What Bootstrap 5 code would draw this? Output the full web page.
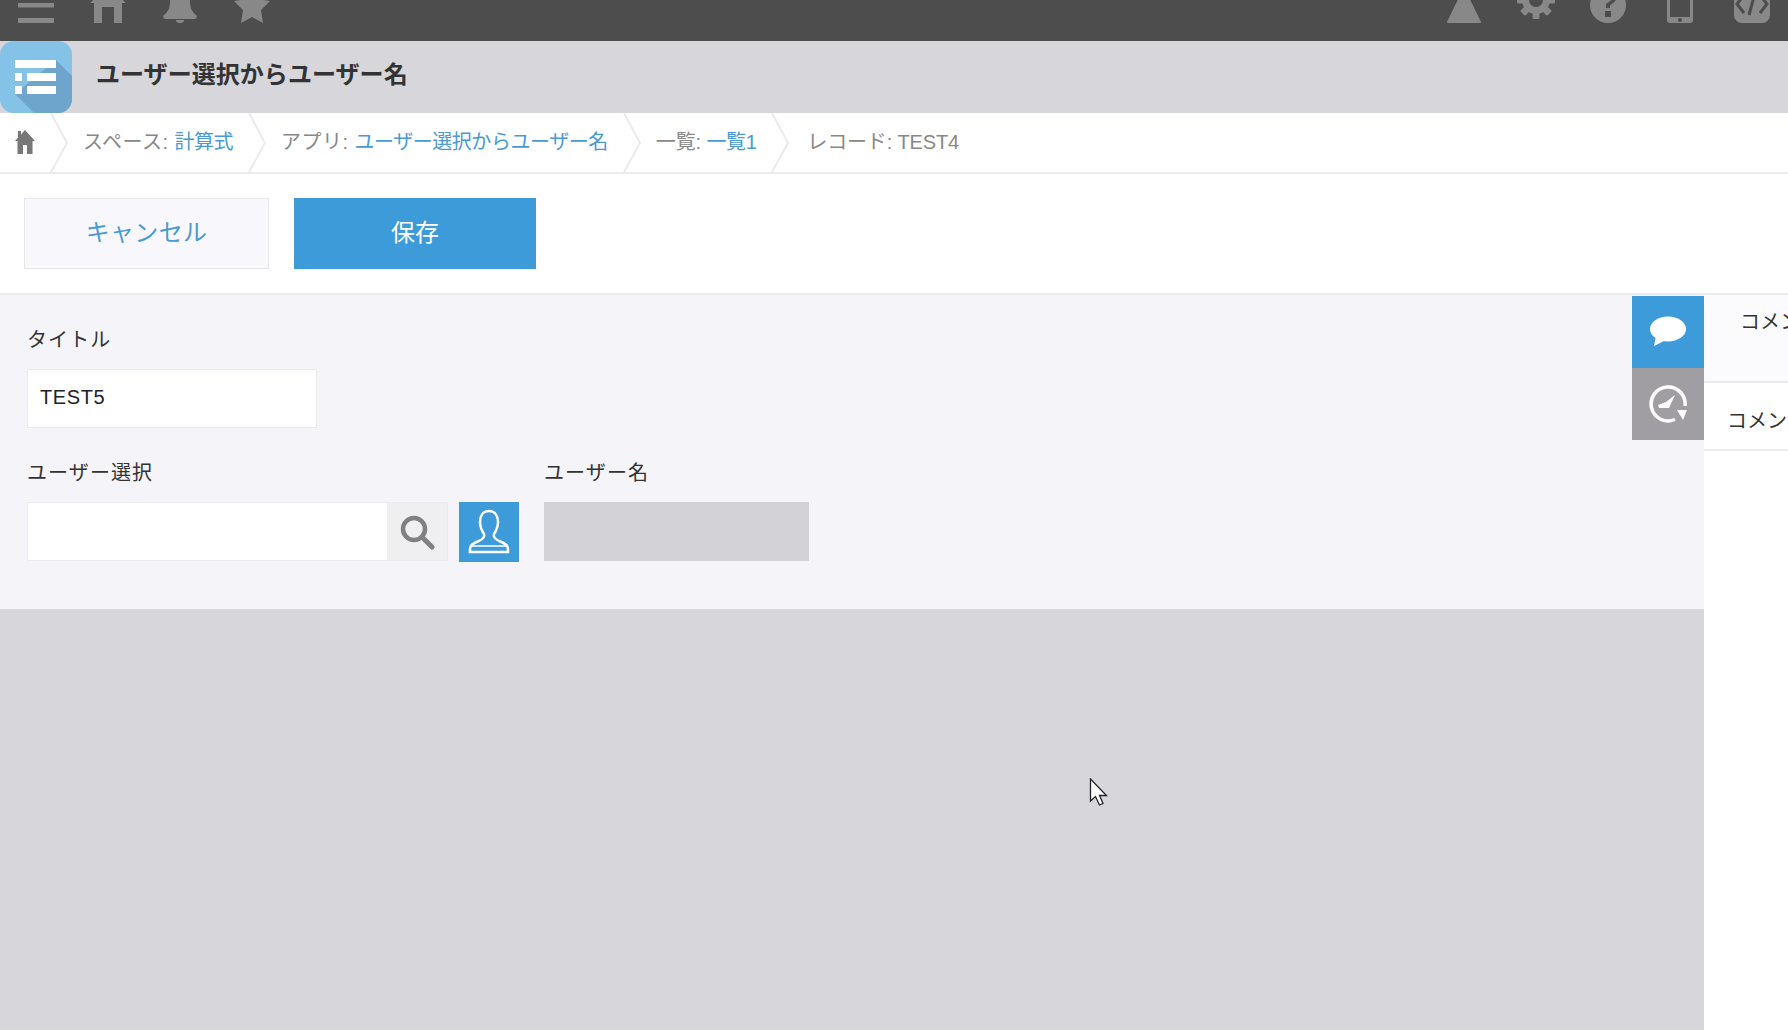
<!DOCTYPE html>
<html lang="ja">
<head>
<meta charset="utf-8">
<title>ユーザー選択からユーザー名</title>
<link rel="stylesheet" href="https://cdn.jsdelivr.net/npm/bootstrap@5.3.0/dist/css/bootstrap.min.css">
<style>
html,body{height:100%;}
body{font-family:"Liberation Sans","Noto Sans CJK JP",sans-serif;background:#fff;color:#333;overflow:hidden;position:relative;}
.topbar{height:41px;background:#4d4d4d;overflow:hidden;}
.top-cell{width:72px;height:41px;padding-bottom:18px;}
.top-cell svg{flex:none;fill:#888;}
.apphead{height:72px;background:#d6d6db;}
.app-logo{width:72px;height:72px;flex:none;}
.app-name{font-size:24px;line-height:30px;font-weight:700;color:#333;margin:0 0 4px 24px;white-space:nowrap;letter-spacing:.05px;}
.crumbs{height:61px;border-bottom:2px solid #ebeaee;font-size:20px;color:#888;letter-spacing:-.45px;}
.crumb{position:relative;height:57px;padding:0 33px 0 15px;white-space:nowrap;}
.crumb-home{width:68px;padding:0 0 0 15px;}
.crumb svg.chev{position:absolute;right:0;top:0;}
.crumb a{color:#4a9ad4;text-decoration:none;}
.lab{letter-spacing:.45px;}
.lab-tight{letter-spacing:-.1px;}
.last-crumb{padding-left:18px;letter-spacing:-.15px;}
.toolbar{height:121px;padding:24px 0 0 24px;border-bottom:2px solid #ebeaee;gap:25px;}
.act{height:71px;font-size:24px;border-radius:0;display:flex;align-items:center;justify-content:center;padding:0 12px 2px;}
.act-cancel{width:245px;background:#f8f8fc;border:1px solid #e6e5ea;color:#4a9ad4;letter-spacing:.3px;}
.act-save{width:242px;background:#3d9bd9;border:1px solid #3d9bd9;color:#fff;}
.work{height:736px;}
.leftcol{width:1704px;flex:none;background:#d6d6db;}
.formpanel{background:#f5f4f8;height:314px;}
.fields{padding:33px 0 0 27px;}
.fld-label{font-size:20px;line-height:24px;margin-bottom:17px;color:#333;white-space:nowrap;letter-spacing:1.1px;}
.textbox{width:290px;height:59px;background:#fff;border:1px solid #ebeaee;font-size:20px;line-height:55px;padding-left:12px;color:#222;letter-spacing:.6px;}
.second-row{margin-top:33px;gap:25px;}
.user-wrap{height:59px;gap:11px;}
.user-input{width:421px;height:59px;background:#fff;border:1px solid #ebeaee;}
.user-input .sbtn{width:60px;background:#efeff1;}
.user-btn{width:60px;height:60px;background:#3d9bd9;}
.readonly-box{width:265px;height:59px;background:#d3d3d7;}
.sidetabs{margin-top:1px;width:72px;}
.stab{width:72px;height:72px;}
.stab-a{background:#3d9bd9;}
.stab-b{background:#a09ea2;}
.rightcol{width:84px;flex:none;overflow:hidden;white-space:nowrap;font-size:20px;color:#333;}
.cmt-box{height:88px;padding:13px 0 0 36px;background:#fbfbfd;border-bottom:2px solid #ebeaee;line-height:28px;}
.cmt-none{height:68px;padding:24px 0 0 23px;border-bottom:2px solid #ebeaee;line-height:28px;}
.pointer{position:absolute;left:1089px;top:778px;}
</style>
</head>
<body>
<div class="topbar d-flex justify-content-between">
  <div class="d-flex">
    <div class="top-cell d-flex align-items-end justify-content-center"><svg width="36" height="36" viewBox="0 0 36 36"><rect x="0" y="0" width="36" height="5"/><rect x="0" y="16" width="36" height="4.500"/><rect x="0" y="31" width="36" height="5"/></svg></div>
    <div class="top-cell d-flex align-items-end justify-content-center"><svg width="36" height="36" viewBox="0 0 36 36"><path d="M18 0 36 16H32V36H24V20H12V36H4V16H0Z"/></svg></div>
    <div class="top-cell d-flex align-items-end justify-content-center"><svg width="36" height="36" viewBox="0 0 36 36"><path d="M18 0c7 0 10 6 10 14 0 7 2 11 6 14 2 2 0 4-2 4H4c-2 0-4-2-2-4 4-3 6-7 6-14C8 6 11 0 18 0Z"/><path d="M14 33h8a4 3 0 0 1-8 0Z"/></svg></div>
    <div class="top-cell d-flex align-items-end justify-content-center"><svg width="36" height="36" viewBox="0 0 36 36"><path d="M18 0 23 12 36 14 27 23 29 36 18 30 7 36 9 23 0 14 13 12Z"/></svg></div>
  </div>
  <div class="d-flex">
    <div class="top-cell d-flex align-items-end justify-content-center"><svg width="36" height="36" viewBox="0 0 36 36"><path d="M18 0 35 35a1 1 0 0 1-1 1H2a1 1 0 0 1-1-1Z"/></svg></div>
    <div class="top-cell d-flex align-items-end justify-content-center"><svg width="38" height="38" viewBox="0 0 38 38"><g transform="translate(19 15)"><circle r="14"/><rect x="-3.500" y="-19" width="7" height="38" rx="1"/><rect x="-3.500" y="-19" width="7" height="38" rx="1" transform="rotate(45)"/><rect x="-3.500" y="-19" width="7" height="38" rx="1" transform="rotate(90)"/><rect x="-3.500" y="-19" width="7" height="38" rx="1" transform="rotate(135)"/><circle r="7" fill="#4d4d4d"/></g></svg></div>
    <div class="top-cell d-flex align-items-end justify-content-center"><svg width="36" height="36" viewBox="0 0 36 36"><path fill-rule="evenodd" d="M18 0a18 18 0 1 0 0 36 18 18 0 0 0 0-36ZM16 21v-3c0-3 6-3 6-7 0-2-2-3-4-3s-4 1-5 3l-3-2c2-3 5-4 8-4 5 0 8 3 8 6 0 5-6 6-6 8v2ZM15 24h6v6h-6Z"/></svg></div>
    <div class="top-cell d-flex align-items-end justify-content-center"><svg width="26" height="36" viewBox="0 0 26 36"><path fill-rule="evenodd" d="M3 0h20a3 3 0 0 1 3 3v30a3 3 0 0 1-3 3H3a3 3 0 0 1-3-3V3a3 3 0 0 1 3-3ZM3 4v26h20V4ZM13 31a2 2 0 1 0 0 4 2 2 0 0 0 0-4Z"/></svg></div>
    <div class="top-cell d-flex align-items-end justify-content-center"><svg width="36" height="36" viewBox="0 0 36 36"><rect width="36" height="36" rx="8"/><path d="M10 8 3 17 10 26M26 8 33 17 26 26M21 6 15 28" fill="none" stroke="#4d4d4d" stroke-width="3"/></svg></div>
  </div>
</div>

<div class="apphead d-flex align-items-center">
  <svg class="app-logo" viewBox="0 0 72 72"><defs><clipPath id="lg"><rect width="72" height="72" rx="14"/></clipPath></defs><rect width="72" height="72" rx="14" fill="#85c2e8"/><path clip-path="url(#lg)" d="M56 19 72 35V72H34L15 53Z" fill="#6ea5cd"/><path fill="#fff" d="M15 19h41v8H15ZM15 32h7v8h-7ZM27 32h29v8H27ZM15 45h7v8h-7ZM27 45h29v8H27Z"/></svg>
  <div class="app-name">ユーザー選択からユーザー名</div>
</div>

<nav class="crumbs d-flex">
  <div class="crumb crumb-home d-flex align-items-center"><svg width="20" height="24" viewBox="0 0 20 24" fill="#777"><path d="M10 0 20 11H17.500V24H12V15H8V24H2.500V11H0ZM3 1h3v4L3 8Z"/></svg><svg class="chev" width="18" height="59" viewBox="0 0 18 59"><path d="M1 0 17 30 1 59" fill="none" stroke="#ebeaee" stroke-width="2"/></svg></div>
  <div class="crumb d-flex align-items-center"><span><span class="lab">スペース: </span><a href="#">計算式</a></span><svg class="chev" width="18" height="59" viewBox="0 0 18 59"><path d="M1 0 17 30 1 59" fill="none" stroke="#ebeaee" stroke-width="2"/></svg></div>
  <div class="crumb d-flex align-items-center"><span><span class="lab">アプリ: </span><a href="#">ユーザー選択からユーザー名</a></span><svg class="chev" width="18" height="59" viewBox="0 0 18 59"><path d="M1 0 17 30 1 59" fill="none" stroke="#ebeaee" stroke-width="2"/></svg></div>
  <div class="crumb d-flex align-items-center"><span><span class="lab-tight">一覧: </span><a href="#">一覧1</a></span><svg class="chev" width="18" height="59" viewBox="0 0 18 59"><path d="M1 0 17 30 1 59" fill="none" stroke="#ebeaee" stroke-width="2"/></svg></div>
  <div class="crumb last-crumb d-flex align-items-center"><span>レコード: TEST4</span></div>
</nav>

<div class="toolbar d-flex">
  <button type="button" class="btn act act-cancel">キャンセル</button>
  <button type="button" class="btn act act-save">保存</button>
</div>

<div class="work d-flex">
  <div class="leftcol">
    <div class="formpanel d-flex justify-content-between">
      <div class="fields">
        <div class="fld-label">タイトル</div>
        <div class="textbox">TEST5</div>
        <div class="second-row d-flex">
          <div>
            <div class="fld-label">ユーザー選択</div>
            <div class="user-wrap d-flex">
              <div class="user-input d-flex justify-content-end">
                <div class="sbtn d-flex align-items-center justify-content-center"><svg width="36" height="36" viewBox="0 0 36 36"><circle cx="15" cy="15" r="11" fill="none" stroke="#808080" stroke-width="4.500"/><path d="M23 23 33 33" stroke="#808080" stroke-width="5" stroke-linecap="round"/></svg></div>
              </div>
              <div class="user-btn d-flex align-items-center justify-content-center"><svg width="44" height="46" viewBox="0 0 44 46"><path d="M22 2c6 0 9 5 9 11 0 5-2 9-4 12-1 3 1 5 5 7 6 2 9 4 9 8v3H3v-3c0-4 3-6 9-8 4-2 6-4 5-7-2-3-4-7-4-12 0-6 3-11 9-11Z" fill="none" stroke="#fff" stroke-width="2.500"/><path d="M3 37h38" stroke="#fff" stroke-width="1.500"/></svg></div>
            </div>
          </div>
          <div>
            <div class="fld-label">ユーザー名</div>
            <div class="readonly-box"></div>
          </div>
        </div>
      </div>
      <div class="sidetabs">
        <div class="stab stab-a d-flex align-items-center justify-content-center"><svg width="40" height="34" viewBox="0 0 40 34"><ellipse cx="20" cy="14" rx="18" ry="12.500" fill="#fff"/><path d="M8 21 6 31 18 25Z" fill="#fff"/></svg></div>
        <div class="stab stab-b d-flex align-items-center justify-content-center"><svg width="40" height="40" viewBox="0 0 40 40"><path d="M37 22A17 17 0 1 0 27 35.500" fill="none" stroke="#fff" stroke-width="3.500"/><path d="M29 26H39L35 36Z" fill="#fff"/><path d="M10 21 18 18 27 11 21 24 11 24Z" fill="#fff"/></svg></div>
      </div>
    </div>
  </div>
  <aside class="rightcol">
    <div class="cmt-box">コメントする</div>
    <div class="cmt-none">コメントはありません</div>
  </aside>
</div>

<svg class="pointer" width="22" height="30" viewBox="0 0 22 30"><path d="M1.500 1V23L6.500 18.500 10.500 27 14 25.500 10.500 17.500H17.500Z" fill="#fff" stroke="#222" stroke-width="1.300"/></svg>

<script src="https://cdn.jsdelivr.net/npm/bootstrap@5.3.0/dist/js/bootstrap.bundle.min.js"></script>
</body>
</html>
